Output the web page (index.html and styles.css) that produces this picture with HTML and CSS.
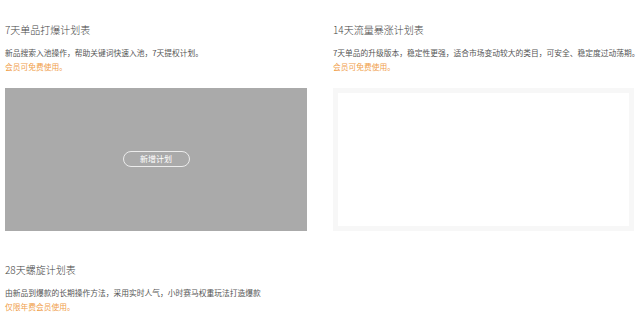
FILE: index.html
```html
<!DOCTYPE html>
<html lang="zh-CN">
<head>
<meta charset="utf-8">
<title>计划表</title>
<link rel="stylesheet" href="styles.css">
</head>
<body>
<div class="plans">
  <section class="plan">
    <h2 class="plan-title">7天单品打爆计划表</h2>
    <p class="plan-desc">新品搜索入池操作，帮助关键词快速入池，7天提权计划。</p>
    <p class="plan-note">会员可免费使用。</p>
    <div class="plan-box plan-box--active">
      <button class="add-btn" type="button">新增计划</button>
    </div>
  </section>
  <section class="plan">
    <h2 class="plan-title">14天流量暴涨计划表</h2>
    <p class="plan-desc">7天单品的升级版本，稳定性更强，适合市场变动较大的类目，可安全、稳定度过动荡期。</p>
    <p class="plan-note">会员可免费使用。</p>
    <div class="plan-box plan-box--empty"></div>
  </section>
  <section class="plan">
    <h2 class="plan-title">28天螺旋计划表</h2>
    <p class="plan-desc">由新品到爆款的长期操作方法，采用实时人气，小时赛马权重玩法打造爆款</p>
    <p class="plan-note">仅限年费会员使用。</p>
  </section>
</div>
</body>
</html>
```
FILE: styles.css
```css
html, body {
  margin: 0;
  padding: 0;
  background: #ffffff;
}
body {
  font-family: "Noto Sans CJK SC", "Noto Sans", sans-serif;
  color: #333;
}
.plans {
  display: grid;
  grid-template-columns: 302px 302px;
  column-gap: 26px;
  row-gap: 32px;
  padding: 23px 5px 0 5px;
}
.plan-title {
  margin: 0;
  font-size: 10px;
  line-height: 14px;
  font-weight: 300;
  color: #444;
}
.plan-desc {
  margin: 8.7px 0 0 0;
  font-size: 7.75px;
  line-height: 14px;
  color: #555;
  white-space: nowrap;
}
.plan-note {
  margin: 0;
  font-size: 7.75px;
  line-height: 14px;
  color: #f0a04b;
}
.plan-box {
  margin-top: 14.3px;
  height: 143px;
  box-sizing: border-box;
  display: flex;
  align-items: center;
  justify-content: center;
}
.plan-box--active {
  background: #aaaaaa;
}
.plan-box--empty {
  background: #ffffff;
  border: 5px solid #f7f7f7;
  margin-right: 1px;
}
.add-btn {
  width: 67px;
  height: 16px;
  border: 1px solid #ececec;
  border-radius: 8px;
  background: transparent;
  color: #ffffff;
  font-family: "Noto Sans CJK SC", "Noto Sans", sans-serif;
  font-size: 8px;
  line-height: 14px;
  padding: 0;
  cursor: pointer;
}
```
